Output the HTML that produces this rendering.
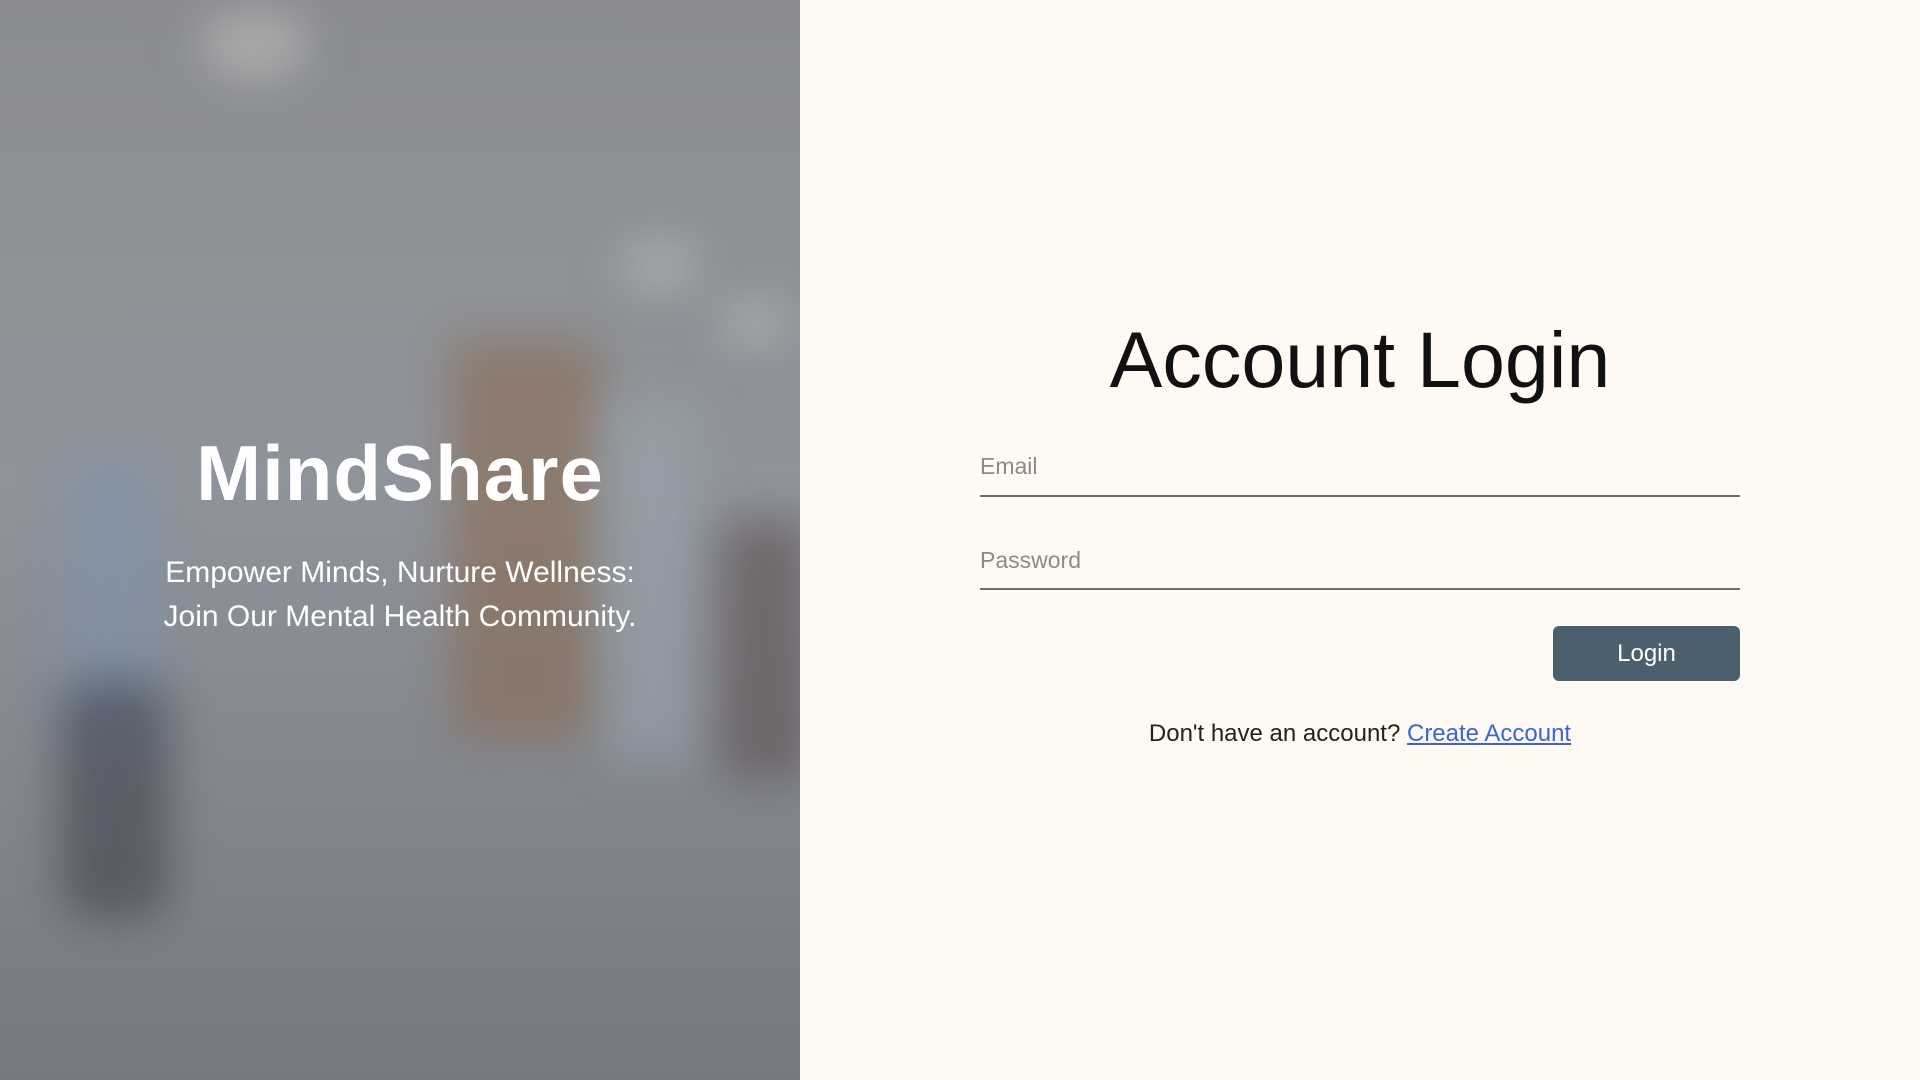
<!DOCTYPE html>
<html><head><meta charset="utf-8"><style>
*{margin:0;padding:0;box-sizing:border-box}
body{width:1920px;height:1080px;overflow:hidden;background:#fefaf3;font-family:"Liberation Sans",sans-serif;position:relative}
#left{position:absolute;left:0;top:0;width:800px;height:1080px;overflow:hidden;background:linear-gradient(180deg,#8a8c91 0%,#8e9196 25%,#8f939a 45%,#83878f 70%,#76797f 100%)}
.b{position:absolute;filter:blur(22px);border-radius:50%}
#left .txt{position:absolute;left:0;width:800px;text-align:center;color:#fff}
#right .lbl{position:absolute;left:980px;color:#8a8a8a;font-size:23px}
.line{position:absolute;left:980px;width:760px;height:2px;background:#6e6e6e}
</style></head><body>
<div id="left">
  <div class="b" style="left:200px;top:10px;width:110px;height:70px;background:#a9aaa9"></div>
  <div class="b" style="left:620px;top:240px;width:80px;height:50px;background:#a8aaae"></div>
  <div class="b" style="left:720px;top:300px;width:70px;height:45px;background:#a8aaae"></div>
  <div class="b" style="left:450px;top:340px;width:150px;height:400px;background:#8a6b52;border-radius:10px;opacity:.6"></div>
  <div class="b" style="left:600px;top:400px;width:100px;height:360px;background:#9aa6b0;border-radius:10px;opacity:.5"></div>
  <div class="b" style="left:60px;top:460px;width:100px;height:280px;background:#7f93a8;border-radius:30px;opacity:.6"></div>
  <div class="b" style="left:60px;top:680px;width:110px;height:240px;background:#3a3e48;border-radius:30px;opacity:.55"></div>
  <div class="b" style="left:720px;top:520px;width:90px;height:260px;background:#5a4a4a;border-radius:20px;opacity:.55"></div>
  <div class="txt" style="top:428px;font-size:78px;font-weight:bold;letter-spacing:1px">MindShare</div>
  <div class="txt" style="top:551px;font-size:30px;line-height:44px">Empower Minds, Nurture Wellness:<br>Join Our Mental Health Community.</div>
</div>
<div id="right">
  <div style="position:absolute;left:980px;width:760px;top:314px;text-align:center;font-size:79px;color:#111">Account Login</div>
  <div class="lbl" style="top:453px">Email</div>
  <div class="line" style="top:495px"></div>
  <div class="lbl" style="top:547px">Password</div>
  <div class="line" style="top:588px"></div>
  <div style="position:absolute;left:1553px;top:626px;width:187px;height:55px;background:#4b606c;border-radius:6px;color:#fff;font-size:24px;text-align:center;line-height:55px">Login</div>
  <div style="position:absolute;left:980px;width:760px;top:720px;text-align:center;font-size:24px;color:#222">Don't have an account? <span style="color:#3b64d8;text-decoration:underline">Create Account</span></div>
</div>
</body></html>
